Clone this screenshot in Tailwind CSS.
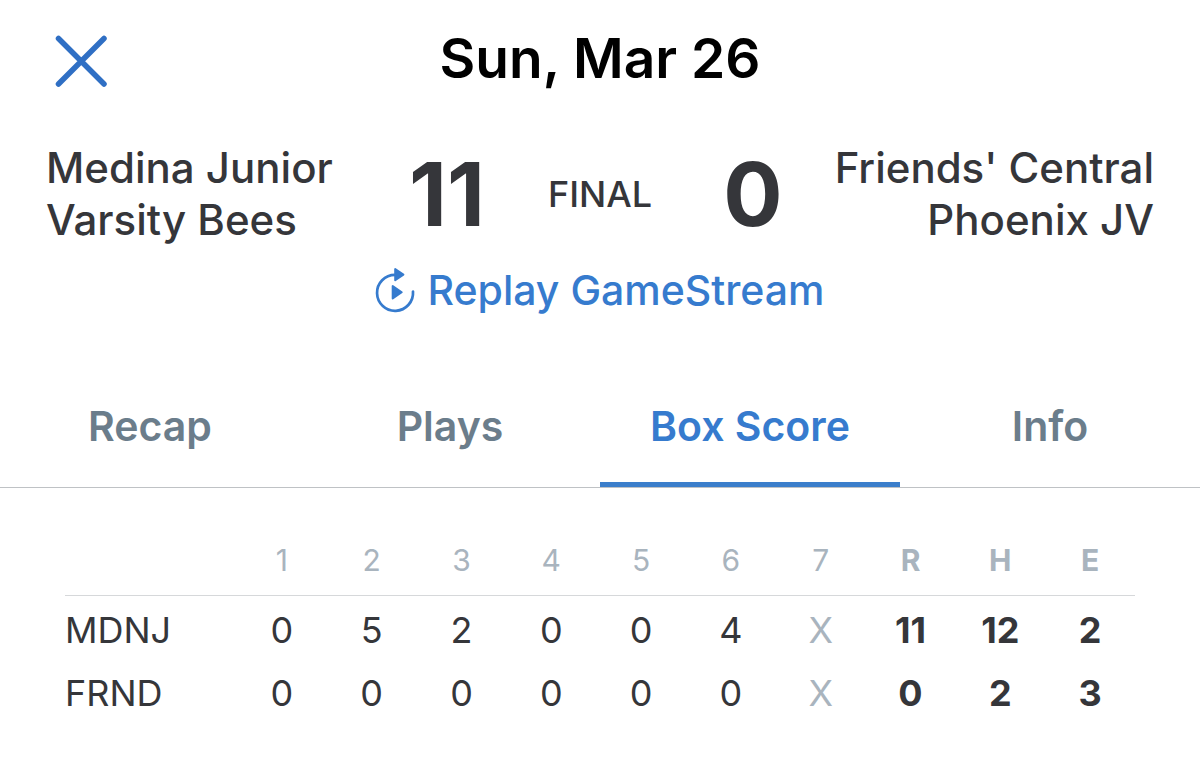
<!DOCTYPE html>
<html lang="en">
<head>
<meta charset="utf-8">
<meta name="viewport" content="width=device-width, initial-scale=1">
<title>Box Score</title>
<script src="https://cdn.jsdelivr.net/npm/@tailwindcss/browser@4"></script>
</head>
<body class="bg-white font-['Inter',sans-serif] text-[#35363a]">
<header class="grid grid-cols-[1fr_auto_1fr] items-center px-[52px] pt-6">
  <button type="button" aria-label="Close" class="mt-1.5 size-[58px] text-[#2f6fc4]">
    <svg viewBox="0 0 58 58" class="size-full" fill="none" stroke="currentColor" stroke-width="5.500" stroke-linecap="round"><path d="M6.500 6.500l45.500 45.500M52 6.500l-45.500 45.500"/></svg>
  </button>
  <h1 class="text-[55px] leading-[68px] font-semibold text-black">Sun, Mar 26</h1>
</header>
<main>
  <section class="pt-[50px]">
    <div class="grid grid-cols-[1fr_auto_1fr] items-center px-[46px]">
      <p class="text-[42px] leading-[52px] font-medium">Medina Junior<br>Varsity Bees</p>
      <div class="grid grid-cols-[140px_166px_140px] items-center text-center">
        <span class="text-[88px] leading-[104px] font-bold">11</span>
        <span class="text-[36px] font-medium">FINAL</span>
        <span class="text-[88px] leading-[104px] font-bold">0</span>
      </div>
      <p class="text-right text-[42px] leading-[52px] font-medium">Friends' Central<br>Phoenix JV</p>
    </div>
    <a href="#" class="mx-auto mt-[18px] flex w-fit items-center gap-3 text-[41px] leading-[52px] font-medium text-[#367bce]">
      <svg viewBox="0 0 40 48" class="h-12 w-10" fill="none" stroke="currentColor" stroke-width="2.700" stroke-linejoin="round" stroke-linecap="round"><path d="M38 25.500A18 18 0 1 1 20 8.800"/><path d="M20.200 3v11.200l8.200-5.600zM17.700 20v12.400l9-6.200z" fill="currentColor" stroke-width="2"/></svg>
      Replay GameStream
    </a>
  </section>
  <nav class="mt-[54px] grid grid-cols-4 border-b border-[#bfc2c5] text-center text-[41px] leading-[52px] font-semibold text-[#6b7d8b]">
    <a href="#" class="pt-[30px] pb-[35px]">Recap</a>
    <a href="#" class="pt-[30px] pb-[35px]">Plays</a>
    <a href="#" aria-current="page" class="border-b-5 border-[#3b7ecb] pt-[30px] pb-[30px] text-[#367bce]">Box Score</a>
    <a href="#" class="pt-[30px] pb-[35px]">Info</a>
  </nav>
  <div class="px-[65px] pt-[54px]">
    <table class="w-full table-fixed text-center text-[36px] leading-[44px]">
      <thead class="text-[30px] leading-9 text-[#a9b4be]">
        <tr class="border-b border-[#d6d8da] *:pb-[17px] *:font-normal">
          <td class="w-[172px]"></td>
          <th scope="col">1</th><th scope="col">2</th><th scope="col">3</th><th scope="col">4</th><th scope="col">5</th><th scope="col">6</th><th scope="col">7</th>
          <th scope="col"><b>R</b></th><th scope="col"><b>H</b></th><th scope="col"><b>E</b></th>
        </tr>
      </thead>
      <tbody>
        <tr class="h-[63px] *:pt-1.5">
          <th scope="row" class="text-left font-normal">MDNJ</th>
          <td>0</td><td>5</td><td>2</td><td>0</td><td>0</td><td>4</td><td class="text-[#a9b4be]">X</td>
          <td class="font-bold">11</td><td class="font-bold">12</td><td class="font-bold">2</td>
        </tr>
        <tr class="h-[63px] *:pt-1.5">
          <th scope="row" class="text-left font-normal">FRND</th>
          <td>0</td><td>0</td><td>0</td><td>0</td><td>0</td><td>0</td><td class="text-[#a9b4be]">X</td>
          <td class="font-bold">0</td><td class="font-bold">2</td><td class="font-bold">3</td>
        </tr>
      </tbody>
    </table>
  </div>
</main>
</body>
</html>
